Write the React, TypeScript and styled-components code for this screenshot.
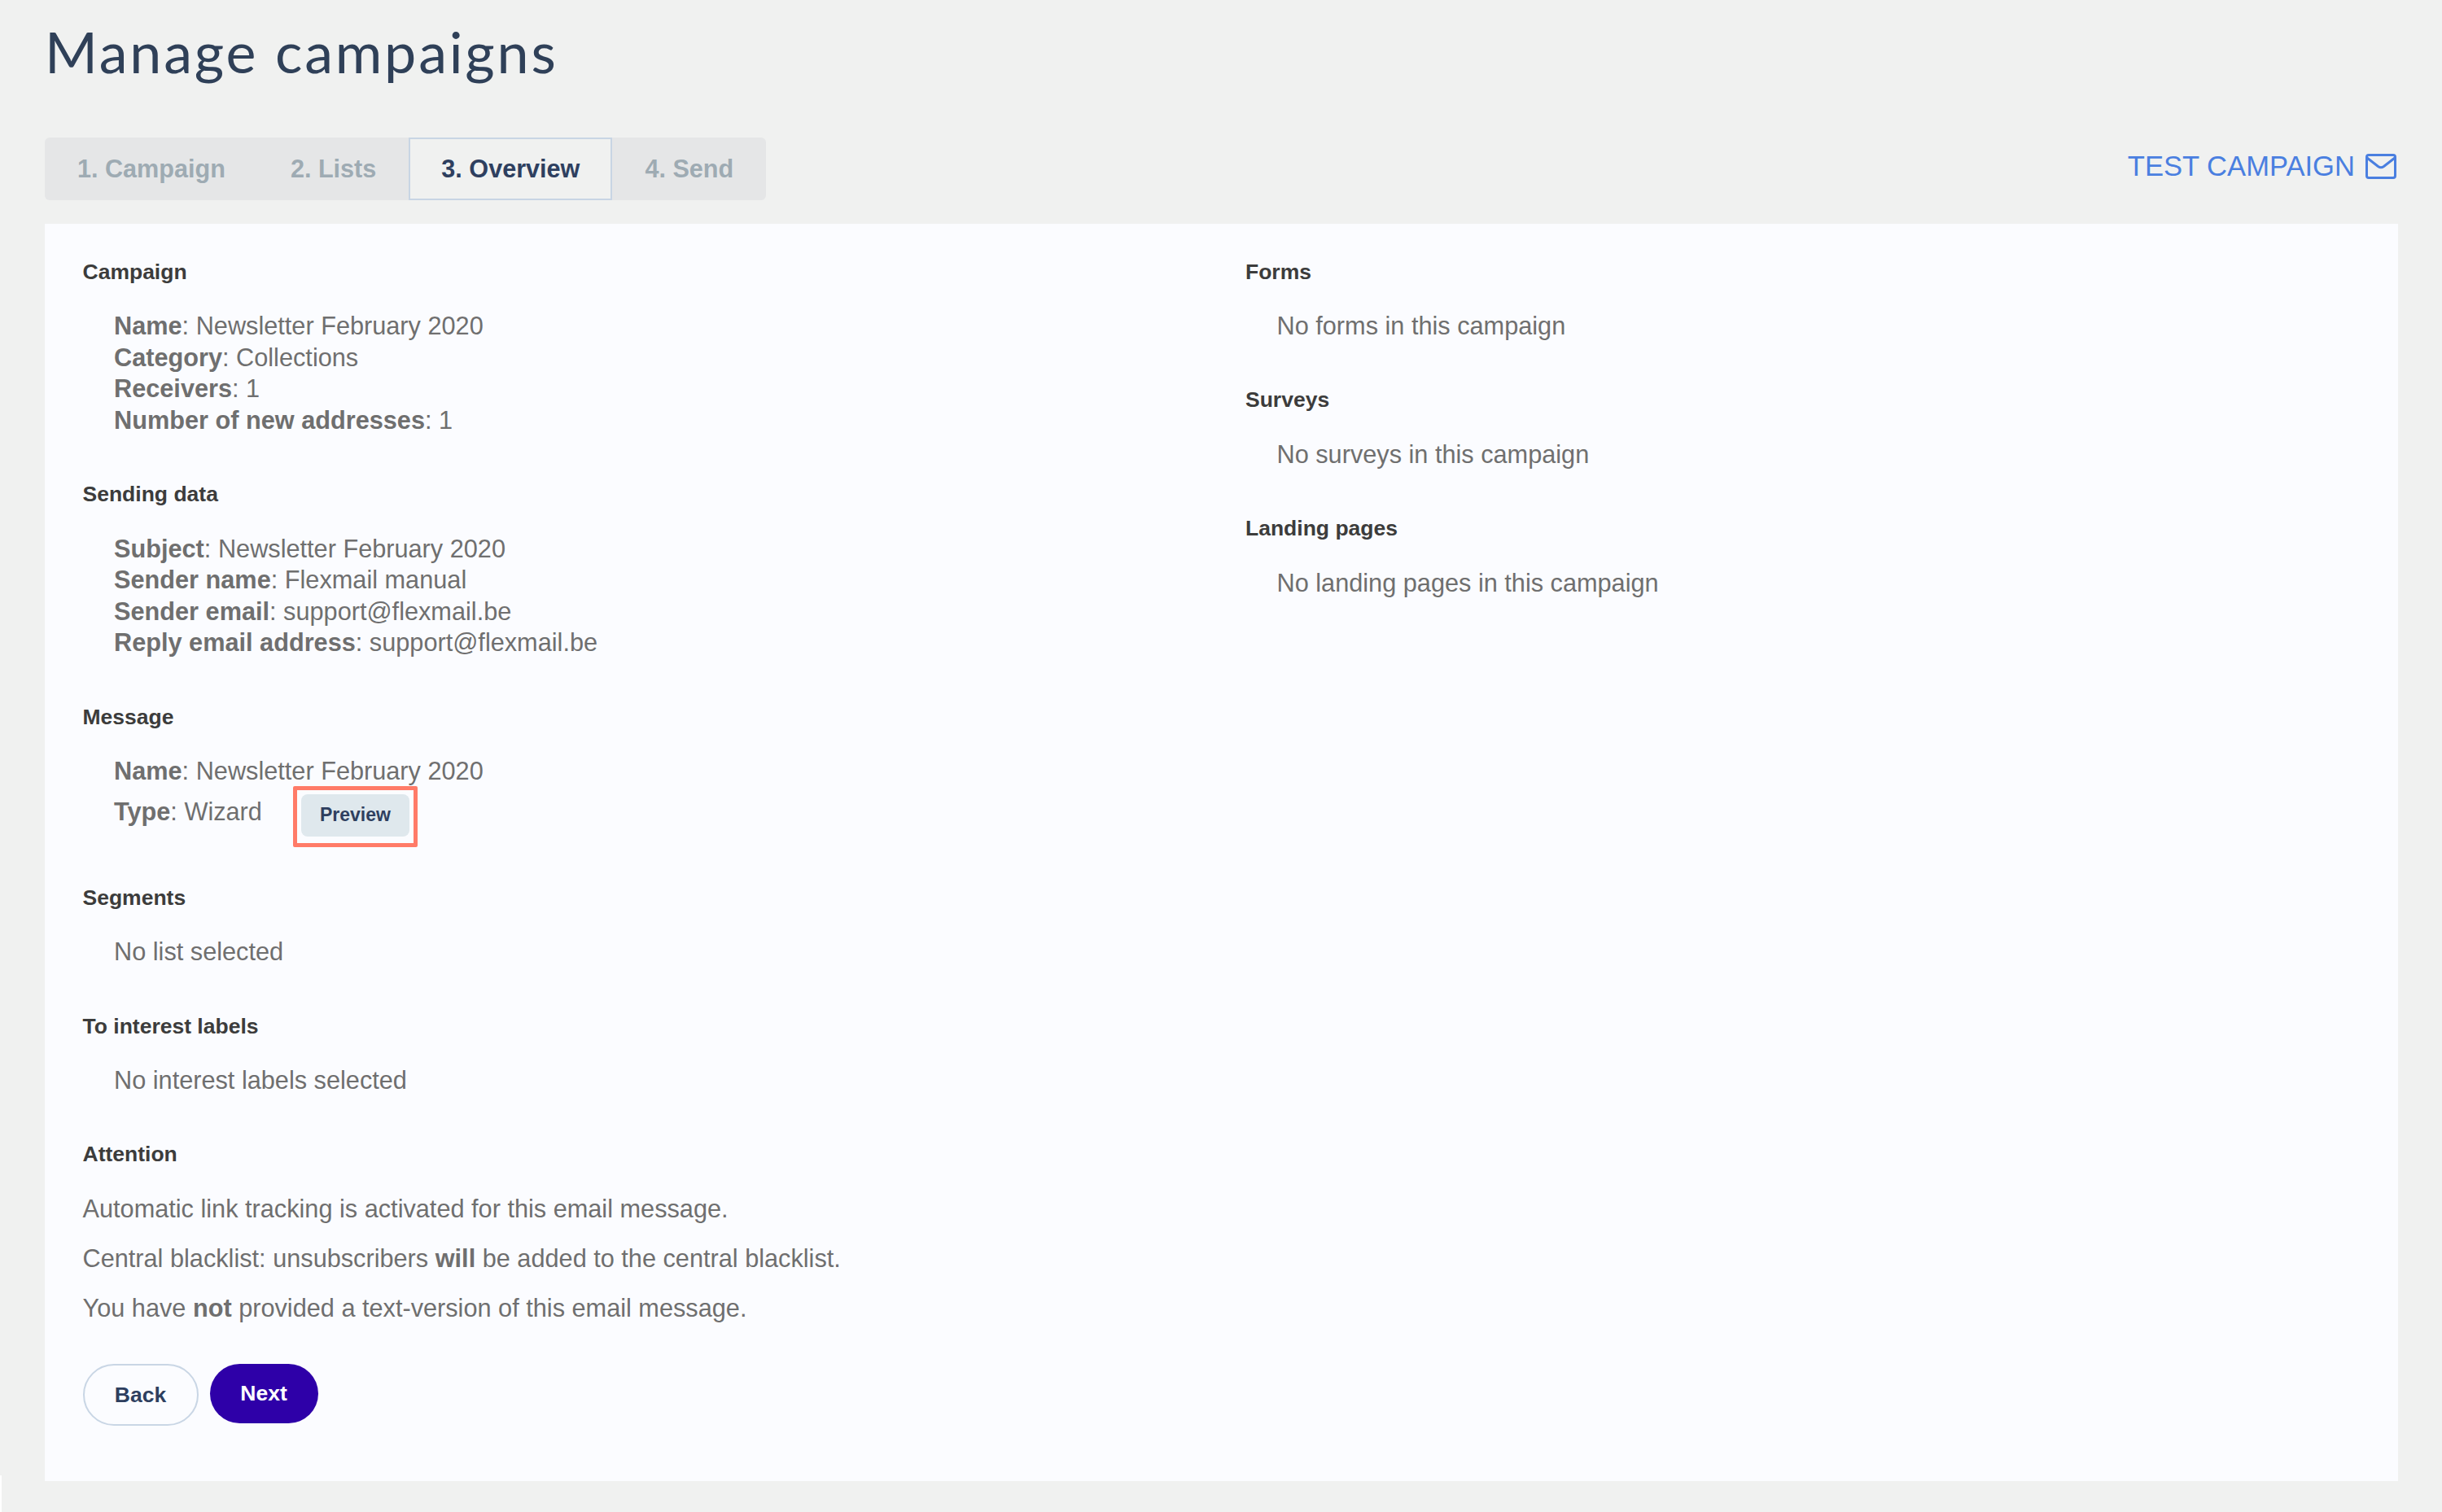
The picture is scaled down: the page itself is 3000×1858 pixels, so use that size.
import * as React from 'react';
import styled, { createGlobalStyle } from 'styled-components';

const GlobalStyle = createGlobalStyle`
  html, body {
    margin: 0;
    padding: 0;
    background: #f0f1f0;
  }
  body {
    font-family: "Liberation Sans", Arial, sans-serif;
    color: #6f6f6f;
  }
`;

const Page = styled.div`
  position: relative;
  width: 3000px;
  height: 1858px;
  padding: 0 54px 0 55px;
  box-sizing: border-box;
  display: flex;
  flex-direction: column;
`;

const CornerSliver = styled.div`
  position: absolute;
  left: 0;
  bottom: 0;
  width: 2px;
  height: 45px;
  background: #ffffff;
`;

const Title = styled.h1`
  margin: 0;
  height: 169px;
  padding: 20px 0 0;
  box-sizing: border-box;
  font-family: Lato, sans-serif;
  font-weight: 400;
  font-size: 70px;
  letter-spacing: 2.8px;
  line-height: 86px;
  color: #2f4058;
`;

const Toolbar = styled.div`
  display: flex;
  justify-content: space-between;
  align-items: center;
  height: 77px;
  margin-bottom: 29px;
`;

const Tabs = styled.div`
  display: flex;
  height: 77px;
  border-radius: 6px;
  background: #e5e6e7;
`;

const Tab = styled.div<{ $active?: boolean }>`
  display: flex;
  align-items: center;
  padding: 0 ${(p) => (p.$active ? 38 : 40)}px;
  box-sizing: border-box;
  font-size: 30.6px;
  font-weight: 700;
  color: ${(p) => (p.$active ? '#2e3f5f' : '#9eabb3')};
  background: ${(p) => (p.$active ? '#f0f1f0' : 'transparent')};
  border: ${(p) => (p.$active ? '2px solid #c8d5e4' : 'none')};
`;

const TestLink = styled.a`
  display: flex;
  align-items: center;
  gap: 13px;
  margin: -6px 2px 0 0;
  font-size: 34.6px;
  color: #4a7fe0;
`;

const Panel = styled.div`
  flex: none;
  height: 1545px;
  box-sizing: border-box;
  padding: 39.5px 47px 0 46.5px;
  background: #fbfcff;
  display: grid;
  grid-template-columns: 1428.5px 1fr;
`;

const Column = styled.div`
  display: flex;
  flex-direction: column;
`;

const Section = styled.section`
  margin-bottom: 51.7px;
`;

const Heading = styled.h3`
  margin: 0 0 29.5px;
  font-size: 26.5px;
  line-height: 38px;
  font-weight: 700;
  color: #3c3c3c;
`;

const Details = styled.div`
  padding-left: 38.5px;
  font-size: 30.7px;
  line-height: 38.6px;
`;

const Line = styled.div``;

const TypeRow = styled.div`
  display: flex;
  align-items: flex-start;
  height: 64.5px;
`;

const TypeText = styled.div`
  margin-top: 11px;
  margin-right: 38px;
`;

const Highlight = styled.div`
  margin-top: -2px;
  padding: 5px 5px 8px;
  border: 5px solid #ff7b68;
  border-radius: 2px;
`;

const PreviewButton = styled.button`
  display: block;
  width: 133px;
  height: 52px;
  padding: 0;
  border: none;
  border-radius: 8px;
  background: #dfe8ed;
  color: #2e3f5f;
  font-family: "Liberation Sans", Arial, sans-serif;
  font-size: 23px;
  font-weight: 700;
`;

const Note = styled.p`
  margin: 0 0 22.6px;
  font-size: 30.7px;
  line-height: 38.6px;
`;

const Actions = styled.div`
  display: flex;
  align-items: flex-start;
  gap: 14px;
  margin-top: 25.5px;
`;

const PillButton = styled.button<{ $primary?: boolean }>`
  height: ${(p) => (p.$primary ? 73 : 76)}px;
  width: ${(p) => (p.$primary ? 133 : 142)}px;
  padding: 0;
  box-sizing: border-box;
  border-radius: 38px;
  border: ${(p) => (p.$primary ? 'none' : '2px solid #c9d6e5')};
  background: ${(p) => (p.$primary ? '#2e00a8' : 'transparent')};
  color: ${(p) => (p.$primary ? '#ffffff' : '#2e3f5f')};
  font-family: "Liberation Sans", Arial, sans-serif;
  font-size: 26.5px;
  font-weight: 700;
`;

const MailIcon = () => (
  <svg width="38" height="31" viewBox="0 0 38 31" fill="none" stroke="#4a7fe0" strokeWidth="3">
    <rect x="1.5" y="1.5" width="35" height="28" rx="2.5" />
    <path d="M2 5 L15.5 15.5 Q19 18 22.5 15.5 L36 5" strokeLinejoin="round" />
  </svg>
);

const Field = ({ label, value }: { label: string; value: string }) => (
  <Line>
    <b>{label}</b>: {value}
  </Line>
);

export default function App() {
  return (
    <Page>
      <GlobalStyle />
      <CornerSliver />
      <Title>Manage campaigns</Title>
      <Toolbar>
        <Tabs>
          <Tab>1. Campaign</Tab>
          <Tab>2. Lists</Tab>
          <Tab $active>3. Overview</Tab>
          <Tab>4. Send</Tab>
        </Tabs>
        <TestLink>
          TEST CAMPAIGN
          <MailIcon />
        </TestLink>
      </Toolbar>
      <Panel>
        <Column>
          <Section>
            <Heading>Campaign</Heading>
            <Details>
              <Field label="Name" value="Newsletter February 2020" />
              <Field label="Category" value="Collections" />
              <Field label="Receivers" value="1" />
              <Field label="Number of new addresses" value="1" />
            </Details>
          </Section>
          <Section>
            <Heading>Sending data</Heading>
            <Details>
              <Field label="Subject" value="Newsletter February 2020" />
              <Field label="Sender name" value="Flexmail manual" />
              <Field label="Sender email" value="support@flexmail.be" />
              <Field label="Reply email address" value="support@flexmail.be" />
            </Details>
          </Section>
          <Section>
            <Heading>Message</Heading>
            <Details>
              <Field label="Name" value="Newsletter February 2020" />
              <TypeRow>
                <TypeText>
                  <b>Type</b>: Wizard
                </TypeText>
                <Highlight>
                  <PreviewButton>Preview</PreviewButton>
                </Highlight>
              </TypeRow>
            </Details>
          </Section>
          <Section>
            <Heading>Segments</Heading>
            <Details>No list selected</Details>
          </Section>
          <Section>
            <Heading>To interest labels</Heading>
            <Details>No interest labels selected</Details>
          </Section>
          <div>
            <Heading>Attention</Heading>
            <Note>Automatic link tracking is activated for this email message.</Note>
            <Note>
              Central blacklist: unsubscribers <b>will</b> be added to the central blacklist.
            </Note>
            <Note>
              You have <b>not</b> provided a text-version of this email message.
            </Note>
          </div>
          <Actions>
            <PillButton>Back</PillButton>
            <PillButton $primary>Next</PillButton>
          </Actions>
        </Column>
        <Column>
          <Section>
            <Heading>Forms</Heading>
            <Details>No forms in this campaign</Details>
          </Section>
          <Section>
            <Heading>Surveys</Heading>
            <Details>No surveys in this campaign</Details>
          </Section>
          <Section>
            <Heading>Landing pages</Heading>
            <Details>No landing pages in this campaign</Details>
          </Section>
        </Column>
      </Panel>
    </Page>
  );
}
